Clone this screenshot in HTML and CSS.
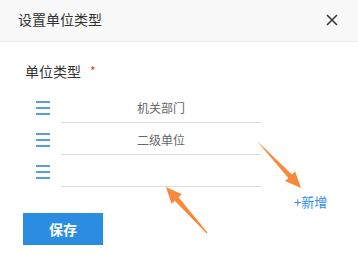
FILE: index.html
```html
<!DOCTYPE html>
<html lang="zh">
<head>
<meta charset="utf-8">
<link rel="stylesheet" href="styles.css">
</head>
<body>
<div class="dialog">
  <div class="header">
    <span class="title">设置单位类型</span>
    <svg class="close" width="12" height="12" viewBox="0 0 12 12"><path d="M1 1L11 11M11 1L1 11" stroke="#333" stroke-width="1.5" fill="none"/></svg>
  </div>
  <div class="content">
    <div class="label">单位类型<span class="req">*</span></div>
    <div class="rows">
      <div class="row">
        <span class="handle"><i></i><i></i><i></i></span>
        <div class="field">机关部门</div>
      </div>
      <div class="row">
        <span class="handle"><i></i><i></i><i></i></span>
        <div class="field">二级单位</div>
      </div>
      <div class="row">
        <span class="handle"><i></i><i></i><i></i></span>
        <div class="field"></div>
      </div>
    </div>
    <div class="add">+新增</div>
    <button class="save">保存</button>
  </div>
  <svg class="arrows" width="358" height="265" viewBox="0 0 358 265">
    <polygon fill="#f68a3a" points="257.6,141.7 258.4,142.3 291.9,174.6 295.2,171.5 301,188 285.0,181.1 288.3,178.0"/>
    <polygon fill="#f68a3a" points="207.4,232.6 206.6,233.4 174.8,200.7 171.5,203.7 166,187 181.9,194.3 178.6,197.3"/>
  </svg>
</div>
</body>
</html>
```
FILE: styles.css
```css
* { box-sizing: border-box; }
html, body { margin: 0; padding: 0; background: #fff; }
body { font-family: "Noto Sans CJK SC", "Noto Sans", sans-serif; }
.dialog { position: relative; width: 358px; height: 265px; overflow: hidden; }
.header {
  height: 42px;
  background: #f8f8f8;
  border-bottom: 1px solid #e8e8e8;
  display: flex;
  align-items: center;
  justify-content: space-between;
  padding: 0 20px 3px 18px;
}
.title { font-size: 14px; color: #333; line-height: 20px; }
.close { display: block; margin-top: 1px; }
.content { padding-left: 23px; }
.label {
  margin-top: 19px;
  padding-left: 2px;
  font-size: 14px;
  line-height: 20px;
  color: #333;
  display: flex;
  align-items: center;
}
.req { color: #ed4014; font-size: 12px; margin-left: 9px; line-height: 12px; }
.rows { margin-top: 10px; margin-left: 13px; }
.row { display: flex; align-items: center; height: 32px; }
.handle {
  width: 14px;
  display: flex;
  flex-direction: column;
  gap: 4px;
  margin-top: 2px;
}
.handle i { display: block; height: 2px; background: #5b9ce0; }
.field {
  margin-left: 11px;
  width: 200px;
  height: 32px;
  border-bottom: 1px solid #dcdcdc;
  font-size: 12px;
  color: #666;
  text-align: center;
  line-height: 20px;
  padding-top: 7px;
}
.add {
  margin-left: 271px;
  margin-top: 5px;
  height: 20px;
  line-height: 20px;
  font-size: 13px;
  color: #2d8cf0;
}
.save {
  display: block;
  margin-top: 1px;
  width: 80px;
  height: 32px;
  border: 0;
  background: #2b8de2;
  color: #fff;
  font-family: "Noto Sans CJK SC", sans-serif;
  font-size: 14px;
  font-weight: bold;
  padding: 0;
}
.arrows { position: absolute; left: 0; top: 0; pointer-events: none; }
```
